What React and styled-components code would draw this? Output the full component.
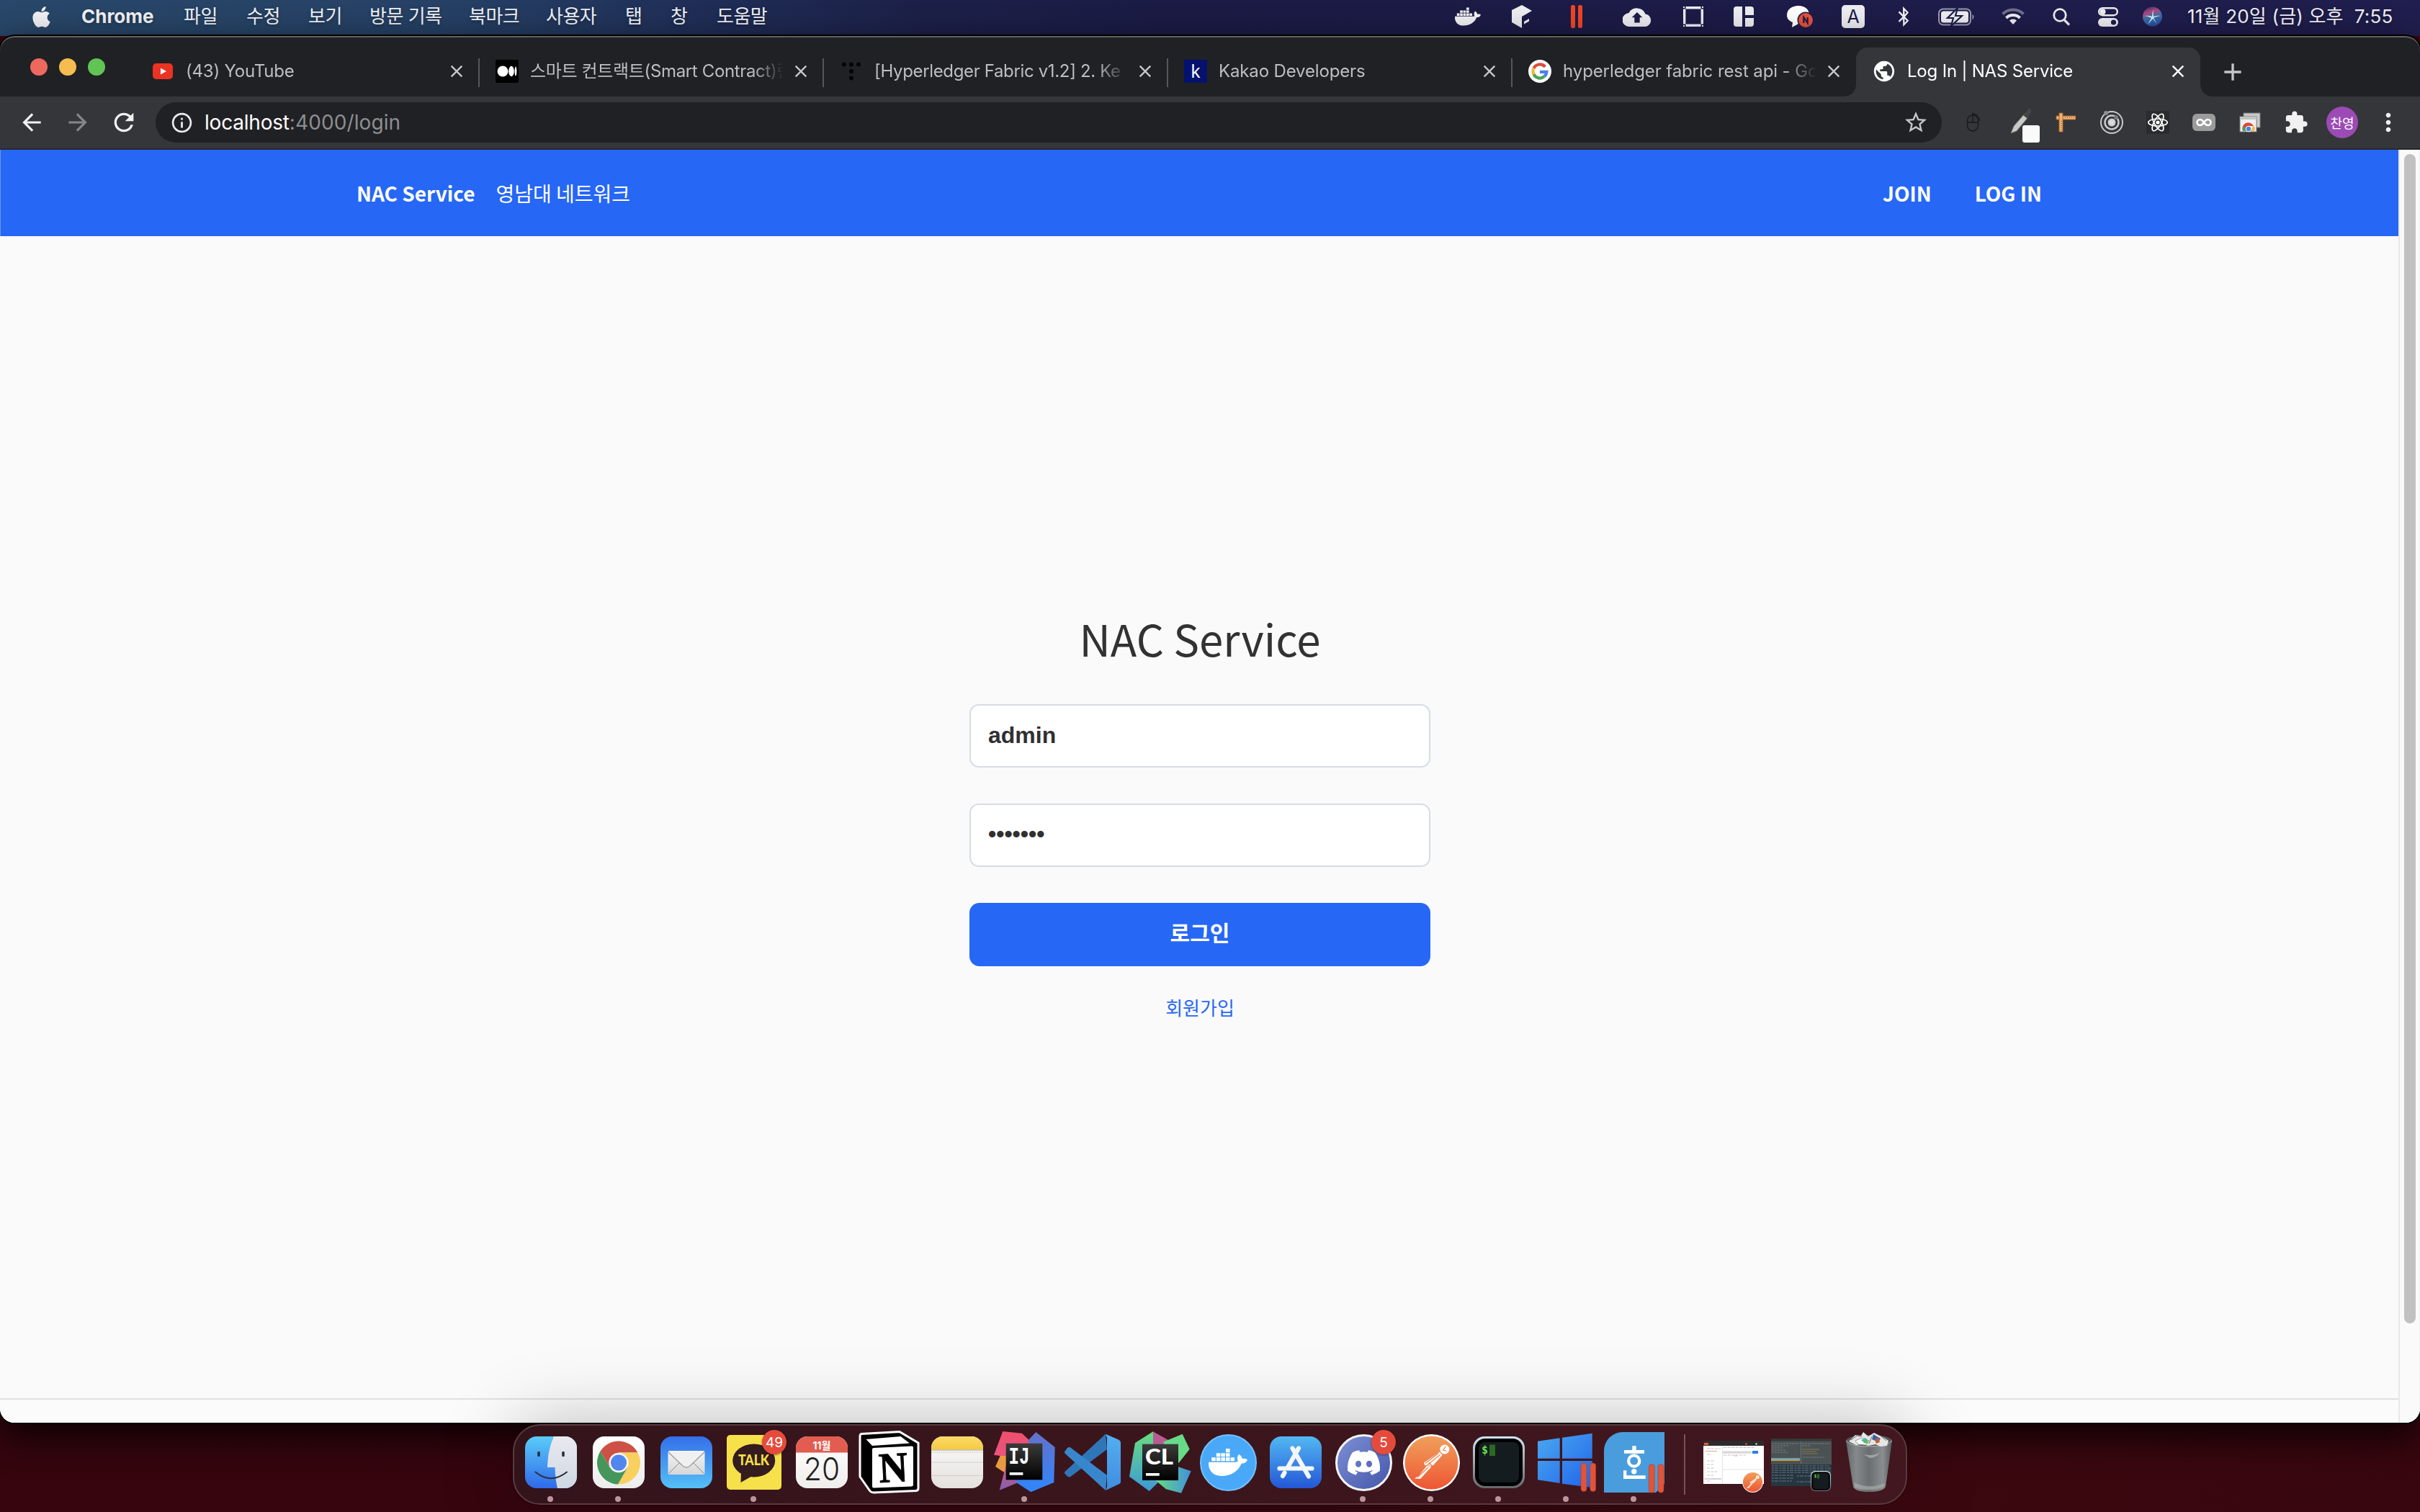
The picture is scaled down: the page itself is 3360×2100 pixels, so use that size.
import React from "react";
import styled, { createGlobalStyle, css } from "styled-components";
import { FaApple, FaDocker, FaBluetoothB, FaDiscord } from "react-icons/fa";
import {
  MdArrowBack, MdArrowForward, MdRefresh, MdInfoOutline, MdStarBorder,
  MdClose, MdAdd, MdMoreVert, MdExtension, MdPublic,
} from "react-icons/md";

const ui = `Inter, "Noto Sans CJK KR", sans-serif`;
const web = `"Noto Sans CJK KR", sans-serif`;

const GlobalStyle = createGlobalStyle`
  * { box-sizing: border-box; }
  body { margin: 0; overflow: hidden; background: #38060f; }
  svg { display: block; flex: none; }
`;

const Desktop = styled.div`
  width: 3360px;
  height: 2100px;
  overflow: hidden;
  display: flex;
  flex-direction: column;
  background: linear-gradient(90deg, #36050e 0%, #36050f 45%, #3c080f 75%, #38060f 100%);
  font-family: ${ui};
`;

/* ---------- menu bar ---------- */
const MenuBar = styled.header`
  flex: none;
  height: 50px;
  padding: 0 36px 4px 41px;
  display: flex;
  align-items: center;
  justify-content: space-between;
  color: #f1f1f4;
  font-size: 26px;
  line-height: 32px;
  background: linear-gradient(90deg, #284769 0%, #264165 18%, #1f2c55 30%, #1c2048 38%, #1b1b45 48%, #1d1b47 70%, #201e4e 100%);
  text-shadow: 0 2px 5px rgba(0, 0, 0, 0.3);
`;
const MenuList = styled.nav`
  display: grid;
  grid-template-columns: 72px 142px 87px 86px 85px 138px 107px 110px 63px 64px 90px;
  align-items: center;
  white-space: nowrap;
`;
const MenuEntry = styled.span`
  letter-spacing: -0.5px;
`;
const AppName = styled.strong`
  font-weight: 700;
  letter-spacing: 0;
`;
const StatusArea = styled.div`
  display: flex;
  align-items: center;
`;
const StatusItem = styled.span`
  display: flex;
  justify-content: center;
  width: ${(p) => p.$w}px;
  margin-right: ${(p) => p.$gap}px;
`;
const Clock = styled.time`
  width: 287px;
  white-space: pre;
  letter-spacing: 0.2px;
`;

/* ---------- browser window ---------- */
const Window = styled.section`
  flex: none;
  height: 1926px;
  display: flex;
  flex-direction: column;
  border-radius: 20px;
  overflow: hidden;
  position: relative;
  box-shadow: 0 0 0 2px #000, 0 18px 52px rgba(0, 0, 0, 0.85);
`;
const TabStrip = styled.div`
  flex: none;
  height: 84px;
  display: flex;
  padding-left: 42px;
  background: #202124;
  box-shadow: inset 0 2px 0 #606163;
  border-radius: 20px 20px 0 0;
`;
const Lights = styled.div`
  display: flex;
  gap: 16px;
  width: 145px;
  padding-top: 31px;
`;
const Light = styled.i`
  width: 24px;
  height: 24px;
  border-radius: 50%;
  background: ${(p) => p.$color};
`;
const Tab = styled.div`
  width: 478px;
  height: 68px;
  margin-top: 16px;
  padding: 0 18px 2px 23px;
  display: flex;
  align-items: center;
  position: relative;
  font-size: 24px;
  color: ${(p) => (p.$active ? "#fff" : "#bdbec0")};
  ${(p) => p.$active && css`
    background: #35363a;
    border-radius: 16px 16px 0 0;
    &::before, &::after {
      content: "";
      position: absolute;
      bottom: 0;
      width: 16px;
      height: 16px;
    }
    &::before { left: -16px; background: radial-gradient(circle at 0 0, transparent 15.5px, #35363a 16px); }
    &::after { right: -16px; background: radial-gradient(circle at 100% 0, transparent 15.5px, #35363a 16px); }
  `}
`;
const Divider = styled.i`
  width: 2px;
  height: 40px;
  margin: 31px -1px 0;
  background: #56575b;
`;
const Favicon = styled.span`
  width: 32px;
  display: flex;
  justify-content: center;
  margin-right: 16px;
`;
const TabTitle = styled.span`
  flex: 1;
  min-width: 0;
  overflow: hidden;
  white-space: nowrap;
  line-height: 36px;
  letter-spacing: ${(p) => p.$track || 0}px;
  mask-image: linear-gradient(90deg, #000 calc(100% - 44px), transparent);
`;
const TabClose = styled.span`
  width: 28px;
  margin-left: 10px;
  margin-right: -1px;
  color: ${(p) => (p.$active ? "#fff" : "#c6c7c9")};
`;
const NewTab = styled.span`
  margin: 30px 0 0 25px;
  color: #c4c5c8;
`;
const KakaoMark = styled.span`
  width: 32px;
  height: 32px;
  text-align: center;
  background: #04116e;
  color: #fff;
  font: 25px/30px "Noto Sans", sans-serif;
`;

const Toolbar = styled.div`
  flex: none;
  height: 74px;
  display: flex;
  align-items: center;
  padding: 0 12px 2px 12px;
  background: #35363a;
  box-shadow: inset 0 -2px 0 #28292c;
`;
const NavButton = styled.span`
  width: 64px;
  display: flex;
  justify-content: center;
  color: ${(p) => (p.$dim ? "#85868a" : "#f1f1f2")};
`;
const AddressBar = styled.div`
  width: 2480px;
  height: 56px;
  margin: 0 12px 0 12px;
  padding: 0 18px 0 20px;
  border-radius: 28px;
  display: flex;
  align-items: center;
  background: #202124;
  color: #e8eaed;
  font-size: 28px;
`;
const Address = styled.span`
  flex: 1;
  margin-left: 15px;
  color: #fff;
  letter-spacing: -0.2px;
  span { color: #8d8e91; letter-spacing: 0.1px; }
`;
const Extension = styled.span`
  width: 64px;
  height: 56px;
  display: flex;
  align-items: center;
  justify-content: center;
  color: #f1f1f2;
`;
const Avatar = styled.span`
  width: 44px;
  height: 44px;
  border-radius: 50%;
  display: grid;
  place-items: center;
  background: #9c4bb5;
  color: #fff;
  font: 18px ${web};
`;

/* ---------- page ---------- */
const Viewport = styled.div`
  flex: 1;
  display: flex;
  background: #fafafa;
  font-family: ${web};
`;
const Page = styled.div`
  flex: 1;
  display: flex;
  flex-direction: column;
`;
const SiteNav = styled.nav`
  height: 120px;
  padding: 0 495px 0 495px;
  display: flex;
  align-items: center;
  background: #2667f6;
  box-shadow: inset 1px 0 0 rgba(255, 255, 255, 0.3);
  color: #fff;
  font-size: 28px;
`;
const Brand = styled.a`
  font-weight: 700;
  margin-right: 29px;
`;
const Tagline = styled.a`
  flex: 1;
`;
const NavLink = styled.a`
  font-weight: 700;
  margin-left: 60px;
`;
const LoginForm = styled.form`
  flex: 1;
  width: 642px;
  margin: 0 auto;
  padding: 514px 0 0 2px;
  display: flex;
  flex-direction: column;
  align-items: center;
`;
const Title = styled.h1`
  margin: 0 0 48px;
  color: #323232;
  font-size: 60px;
  font-weight: 400;
  line-height: 88px;
`;
const Field = styled.input`
  width: 640px;
  height: 88px;
  margin-bottom: 50px;
  padding: 0 24px ${(p) => (p.type === "password" ? 4 : 2)}px;
  border: 2px solid #d5dce7;
  border-radius: 13px;
  background: #fff;
  color: #303030;
  font: 700 32px "Liberation Sans", Arial, sans-serif;
  outline: none;
`;
const Submit = styled.button`
  width: 640px;
  height: 88px;
  padding: 0 0 8px;
  border: 0;
  border-radius: 14px;
  background: #2667f6;
  color: #fff;
  font: 700 30px ${web};
`;
const JoinLink = styled.a`
  margin-top: 38px;
  color: #2667f6;
  font-size: 26px;
  line-height: 38px;
`;
const Footer = styled.footer`
  height: 34px;
  border-top: 2px solid #e0e0e0;
  background: #fbfbfb;
`;
const Scrollbar = styled.div`
  width: 30px;
  padding: 6px 6px 0;
  border-left: 2px solid #e8e8e8;
  border-right: 1px solid #f0f0f0;
  background: #fafafa;
`;
const Thumb = styled.div`
  width: 16px;
  height: 1624px;
  border-radius: 8px;
  background: #c1c1c1;
`;

/* ---------- dock ---------- */
const DockBar = styled.footer`
  flex: none;
  align-self: center;
  position: relative;
  z-index: 2;
  width: 1936px;
  height: 112px;
  margin-top: 2px;
  padding: 0 4px;
  display: flex;
  border: 2px solid #5b3a41;
  border-radius: 38px;
  background: linear-gradient(90deg, #34141b, #3a151c 40%, #42171f);
  box-shadow: 0 0 100px rgba(0, 0, 0, 0.26), 0 0 2px #000;
`;
const DockItem = styled.div`
  width: 94px;
  height: 108px;
  padding-top: 4px;
  display: flex;
  flex-direction: column;
  align-items: center;
  position: relative;
`;
const IconBox = styled.div`
  height: 94px;
  display: flex;
  align-items: center;
  justify-content: center;
`;
const RunningDot = styled.i`
  width: 8px;
  height: 8px;
  margin-right: 2px;
  border-radius: 50%;
  background: #bb949d;
`;
const Badge = styled.span`
  position: absolute;
  left: 58px;
  top: 6px;
  width: 34px;
  height: 34px;
  border-radius: 50%;
  display: grid;
  place-items: center;
  background: #e54b3c;
  color: #fff;
  font-size: 19px;
  box-shadow: 0 1px 3px rgba(0, 0, 0, 0.4);
`;
const DockDivider = styled.i`
  width: 2px;
  height: 84px;
  margin: 12px 20px 0 22px;
  background: #775159;
`;
const Disc = styled.span`
  width: 79px;
  height: 79px;
  border-radius: 50%;
  display: grid;
  place-items: center;
  border: ${(p) => p.$ring};
  background: ${(p) => p.$fill};
  color: #fff;
`;

/* ---------- menu bar icons ---------- */
const CubeIcon = () => (
  <svg width="28" height="32" viewBox="0 0 28 32" fill="#ececf1">
    <path d="M14 0 28 8 14 16v16L0 24V7z" /><path d="m17 23 7-4v3.500l-7 4z" />
  </svg>
);
const ParallelsIcon = () => (
  <svg width="16" height="32" fill="#f04524"><rect width="6" height="32" rx="2.500" /><rect x="10" width="6" height="32" rx="2.500" /></svg>
);
const CloudIcon = () => (
  <svg width="40" height="28" viewBox="0 0 40 28">
    <path fill="#ececf1" d="M9.500 28A9.500 9.500 0 0 1 8.500 9 12.500 12 0 0 1 31.500 10.500 8.800 8.800 0 0 1 31 28z" />
    <path fill="#1c1c48" d="m20 8 7.300 7.300h-3.600v7.300h-7.400v-7.300h-3.600z" />
  </svg>
);
const FrameIcon = () => (
  <svg width="28" height="28" fill="none" stroke="#ececf1"><path strokeWidth="3.400" d="M1.700 3.500v21M26.300 3.500v21M3.500 1.700h21M3.500 26.300h21" /><path fill="#ececf1" stroke="none" d="M0 0h2v2H0zM26 0h2v2h-2zM0 26h2v2H0zM26 26h2v2h-2z" /></svg>
);
const MagnetIcon = () => (
  <svg width="28" height="28" fill="#ececf1"><path d="M4 0h8v28H4a4 4 0 0 1-4-4V4a4 4 0 0 1 4-4zM16 0h8a4 4 0 0 1 4 4v8H16zM16 16h12v8a4 4 0 0 1-4 4h-8z" /></svg>
);
const ChatIcon = () => (
  <svg width="36" height="31" viewBox="0 0 36 31">
    <path fill="#fff" d="M16 0c9 0 15 5 15 13S25 25 16 25l-9 5 1-7C3 21 0 18 0 13 0 5 7 0 16 0z" />
    <circle cx="26" cy="20" r="11.500" fill="#1c1c48" /><circle cx="26" cy="20" r="9.900" fill="#e5523c" />
    <path d="M23.300 24v-8l5.400 8v-8" fill="none" stroke="#231d45" strokeWidth="2.200" />
  </svg>
);
const InputIcon = () => (
  <svg width="32" height="32"><rect width="32" height="32" rx="5" fill="#ececf1" /><text x="16" y="25" textAnchor="middle" fontFamily="Inter, sans-serif" fontSize="25" fill="#1c1c48" style={{ textShadow: "none" }}>A</text></svg>
);
const BatteryIcon = () => (
  <svg width="50" height="25" viewBox="0 0 50 25">
    <rect x="1" y="1.500" width="44" height="22" rx="6" fill="none" stroke="#9a99ad" strokeWidth="2" />
    <rect x="4" y="4.500" width="38" height="16" rx="3.500" fill="#ececf1" />
    <path d="M47.500 8.500q4 4 0 8z" fill="#9a99ad" />
    <path d="M27 0 13 14h8l-3 11 15-14h-9z" fill="#ececf1" stroke="#1c1c48" strokeWidth="2.200" />
  </svg>
);
const WifiIcon = () => (
  <svg width="32" height="24" viewBox="0 0 32 24" fill="none" strokeWidth="4">
    <path d="M1.500 8.500a20.500 20.500 0 0 1 29 0" stroke="#6f6e8c" /><path d="M6.500 14a13.500 13.500 0 0 1 19 0" stroke="#ececf1" />
    <path d="m16 23-5-5.500a7 7 0 0 1 10 0z" fill="#ececf1" />
  </svg>
);
const SearchIcon = () => (
  <svg width="24" height="25" fill="none" stroke="#ececf1" strokeWidth="2.800"><circle cx="10" cy="10" r="8.300" /><path d="m16 16.500 7 7" strokeWidth="3.200" /></svg>
);
const ControlIcon = () => (
  <svg width="28" height="27"><rect x="1.200" y="1.200" width="25.600" height="10" rx="5" fill="none" stroke="#ececf1" strokeWidth="2.400" /><circle cx="6.500" cy="6.200" r="4" fill="#ececf1" /><rect y="15" width="28" height="12" rx="6" fill="#ececf1" /><circle cx="21.500" cy="21" r="3.600" fill="#1c1c48" /></svg>
);
const SiriIcon = () => (
  <svg width="27" height="28" viewBox="0 0 27 28">
    <defs><linearGradient id="siri" x1="0.200" y1="0" x2="0.500" y2="1"><stop offset="0" stopColor="#3b3168" /><stop offset=".3" stopColor="#b0487f" /><stop offset=".55" stopColor="#3f6ea8" /><stop offset="1" stopColor="#274a9c" /></linearGradient></defs>
    <circle cx="13.500" cy="14" r="13.500" fill="url(#siri)" />
    <path d="M2 13q6-1 11 1 0-6 2-10-1 6 0 10 6-2 10-1-7 1-10 3l5 8-6-7-7 8 5-9q-5-3-10-3z" fill="#c8f3f4" />
  </svg>
);

/* ---------- favicons ---------- */
const YouTubeMark = () => (<svg width="28" height="22"><rect width="28" height="22" rx="5" fill="#ea3323" /><path d="m11 6.500 8 4.500-8 4.500z" fill="#fff" /></svg>);
const MediumMark = () => (<svg width="32" height="32"><rect width="32" height="32" rx="2" fill="#000" /><g fill="#fff"><circle cx="10" cy="16" r="7.500" /><ellipse cx="22" cy="16" rx="3.800" ry="7.200" /><ellipse cx="28" cy="16" rx="1.400" ry="6.500" /></g></svg>);
const TistoryMark = () => (<svg width="26" height="26"><g fill="#050505"><circle cx="3" cy="3.500" r="3" /><circle cx="13" cy="3.500" r="3" /><circle cx="23" cy="3.500" r="3" /><circle cx="13" cy="13" r="3" /><circle cx="13" cy="22.500" r="3" /></g></svg>);
const GoogleMark = () => (
  <svg width="32" height="32" viewBox="0 0 32 32"><circle cx="16" cy="16" r="16" fill="#fff" />
    <g fill="none" strokeWidth="4.200"><path d="M23.300 9.900A9.500 9.500 0 0 0 7.500 11.700" stroke="#dc4b3d" /><path d="M7.500 11.700a9.500 9.500 0 0 0 0 8.600" stroke="#f3b93a" /><path d="M7.500 20.300a9.500 9.500 0 0 0 14.700 2.900" stroke="#4ca456" /><path d="M22.200 23.200a9.500 9.500 0 0 0 3.200-6.400H16" stroke="#4a82ee" /></g>
  </svg>
);

/* ---------- extension icons ---------- */
const MouseIcon = () => (<svg width="20" height="30" viewBox="0 0 20 30" fill="none" stroke="#17181a" strokeWidth="1.300"><rect x="1.500" y="5" width="15" height="22" rx="7.500" /><path d="M9 1v14M1.500 15h15M9 3q9 1 9 10" /></svg>);
const DropperIcon = () => (
  <svg width="64" height="56" viewBox="0 0 64 56"><path d="M39 16 24 33l-4 10 8-3 15-18z" fill="#c9cac8" stroke="#6b6b6b" /><path d="m36 17 5-3 3-5q5-1 4 5l-3 4-1 6z" fill="#464646" /><rect x="36" y="32" width="24" height="24" rx="3" fill="#fafafa" /></svg>
);
const RulerIcon = () => (<svg width="28" height="28"><path d="M1 5h27v5H1z" fill="#efb274" stroke="#a5622d" /><path d="M5 1h5v26H5z" fill="#efb274" stroke="#a5622d" /><path d="M13 7h13M8 12v13" stroke="#6e3c15" strokeDasharray="1 2" /></svg>);
const TargetIcon = () => (<svg width="34" height="34" fill="none" stroke="#c9cacb" strokeWidth="2"><circle cx="17" cy="17" r="15" /><circle cx="17" cy="17" r="9.500" strokeWidth="2.500" /><circle cx="17" cy="17" r="4.500" fill="#dadada" /><circle cx="9" cy="4" r="3" fill="#8c8d8f" stroke="none" /><circle cx="23" cy="10" r="3" fill="#77787a" stroke="none" /></svg>);
const ReactIcon = () => (
  <svg width="32" height="32" viewBox="-16 -16 32 32"><rect x="-16" y="-16" width="32" height="32" rx="2" fill="#2a2b2e" />
    <g fill="none" stroke="#fff" strokeWidth="1.700"><ellipse rx="13.200" ry="5" /><ellipse rx="13.200" ry="5" transform="rotate(60)" /><ellipse rx="13.200" ry="5" transform="rotate(120)" /></g><circle r="2.600" fill="#fff" /></svg>
);
const InfinityIcon = () => (<svg width="32" height="24"><rect width="32" height="24" rx="6" fill="#9b9b9b" /><g fill="none" stroke="#fff" strokeWidth="2.600"><path d="M16 12c-2-3-3.500-4-5.500-4a4 4 0 0 0 0 8c2 0 3.500-1 5.500-4s3.500-4 5.500-4a4 4 0 0 1 0 8c-2 0-3.500-1-5.500-4z" /></g></svg>);
const StoreIcon = () => (
  <svg width="30" height="28" viewBox="0 0 30 28"><rect x="6" y="1" width="23" height="20" fill="#c9c9ca" stroke="#77787a" /><rect x="1" y="6" width="23" height="21" fill="#f1f1f1" stroke="#77787a" /><path d="M1 6h23v4H1z" fill="#c4c4c4" />
    <path d="M5 26a8 8 0 0 1 15-7h-7z" fill="#d8483a" /><path d="M20 18q3 4 1 8h-6z" fill="#f2bd42" /><path d="M5 26q-1-4 1-7l6 7z" fill="#4d9f56" /><circle cx="13" cy="23" r="3.800" fill="#4a80e8" stroke="#fff" /></svg>
);

/* ---------- dock icons ---------- */
const Grad = ({ id, from, to, x2 = 0, y2 = 1 }) => (
  <linearGradient id={id} x1="0" y1="0" x2={x2} y2={y2}><stop offset="0" stopColor={from} /><stop offset="1" stopColor={to} /></linearGradient>
);
const FinderIcon = () => (
  <svg width="72" height="72"><defs><Grad id="finder" from="#5accf8" to="#3069ea" /><Grad id="finderR" from="#e9e9ef" to="#d0d8e2" /><clipPath id="finderC"><rect width="72" height="72" rx="16" /></clipPath></defs>
    <g clipPath="url(#finderC)"><rect width="72" height="72" fill="url(#finder)" /><path d="M40 0Q31 20 31 43H41.500Q42 60 45 72H72V0z" fill="url(#finderR)" /></g>
    <g stroke="#27303a" strokeLinecap="round" fill="none"><path d="M19 22.500v4M53 22.500v4" strokeWidth="3.600" /><path d="M14.500 49.500Q36 67 58 49.500" strokeWidth="2" /></g></svg>
);
const ChromeIcon = () => (
  <svg width="72" height="72"><defs><Grad id="chromeBg" from="#ffffff" to="#ececec" /></defs><rect width="72" height="72" rx="16" fill="url(#chromeBg)" />
    <path d="M10.600 20.600A30 30 0 0 1 62.500 22.500H36V36.500L23.900 43.500z" fill="#cd5144" /><path d="M62.500 22.500A30 30 0 0 1 34.900 66.500L48.100 43.500 36 36.500V22.500z" fill="#f9d05e" /><path d="M34.900 66.500A30 30 0 0 1 10.600 20.600L23.900 43.500 36 36.500 48.100 43.500z" fill="#45965b" />
    <circle cx="36" cy="36.500" r="13.700" fill="#f4f3f2" /><circle cx="36" cy="36.500" r="11" fill="#5186ee" /></svg>
);
const MailIcon = () => (
  <svg width="72" height="72"><defs><Grad id="mail" from="#346fea" to="#55c0f7" /><Grad id="env" from="#f5f5f5" to="#d6d6d6" /></defs><rect width="72" height="72" rx="16" fill="url(#mail)" />
    <rect x="10.500" y="20" width="51" height="33" rx="2.500" fill="url(#env)" /><path d="m12 51 14-14M60 51 46 37" stroke="#8c8c8c" fill="none" /><path d="M11 22 31 41q5 4 10 0L61 22" fill="#f0f0f0" stroke="#9b9b9b" strokeWidth="1.300" /></svg>
);
const KakaoIcon = () => (
  <svg width="76" height="76"><rect width="76" height="76" rx="5" fill="#f6e14b" /><ellipse cx="37.700" cy="35.500" rx="29.500" ry="23" fill="#351c1e" /><path d="M20 51 19.500 66 37 56z" fill="#351c1e" />
    <text x="16" y="42" textLength="43" lengthAdjust="spacingAndGlyphs" fontFamily="Lato, sans-serif" fontWeight="900" fontSize="20" fill="#f6e14b">TALK</text></svg>
);
const CalendarIcon = () => (
  <svg width="72" height="72"><defs><clipPath id="cal"><rect width="72" height="72" rx="16" /></clipPath><Grad id="calP" from="#ffffff" to="#efeeec" /></defs><g clipPath="url(#cal)"><rect width="72" height="72" fill="url(#calP)" /><rect width="72" height="22.500" fill="#e25d50" /></g>
    <text x="36" y="18" textAnchor="middle" fontFamily={ui} fontWeight="700" fontSize="14" fill="#fff">11월</text>
    <text x="11" y="61" textLength="50" lengthAdjust="spacingAndGlyphs" fontFamily="Inter, sans-serif" fontWeight="300" fontSize="43" fill="#222">20</text></svg>
);
const NotionIcon = () => (
  <svg width="86" height="88" viewBox="0 0 86 88"><path d="M4 4.500 57 1.500 83 17V80q0 3-3 3.500L21 86q-3 0-5-2L2 64V8q0-3 2-3.500z" fill="#000" stroke="#fff" strokeWidth="3" strokeLinejoin="round" />
    <path d="m10.500 12 48-4L71 17.500 19 21z" fill="#fff" /><path d="m21 24 53-2.500q2 0 2 2V75q0 2-2 2.500L21 79.500q-2 0-2-2V26q0-2 2-2z" fill="#fff" />
    <text x="28" y="71" transform="rotate(-3 48 50)" textLength="40" lengthAdjust="spacingAndGlyphs" fontFamily="Liberation Serif, serif" fontWeight="700" fontSize="59" fill="#000" stroke="#000">N</text></svg>
);
const NotesIcon = () => (
  <svg width="72" height="72"><defs><clipPath id="notes"><rect width="72" height="72" rx="16" /></clipPath><Grad id="noteY" from="#fbdb6b" to="#f6c93f" /><Grad id="noteP" from="#fbfbfa" to="#e4e1dd" /></defs><g clipPath="url(#notes)"><rect width="72" height="72" fill="url(#noteP)" /><rect width="72" height="18.500" fill="url(#noteY)" /><path d="M0 19h72" stroke="#aaa69e" /><path d="M0 22h72" stroke="#b6b3ae" strokeDasharray="1.200 1.500" /><path d="M0 36h72M0 54.500h72" stroke="#d3d0cc" /></g></svg>
);
const IntelliJIcon = () => (
  <svg width="86" height="86"><defs><Grad id="ijR" from="#ee4f6d" to="#e9557e" /><Grad id="ijB" from="#6471c9" to="#2f86fb" /><Grad id="ijP" from="#cf5584" to="#8361b1" /><Grad id="box" from="#3b3b3b" to="#000000" /></defs>
    <path d="M12.300 0 39 2.700 58 21 50 40 0 32.700z" fill="url(#ijR)" /><path d="M8.700 34 2 49l14 9 6-24z" fill="#e99a40" /><path d="M17 46 7.700 81.700 46 66z" fill="url(#ijP)" /><path d="M58.300 1 84.700 22l-1.400 49-32 13.300L31 71l20-53-4-5z" fill="url(#ijB)" />
    <rect x="16.700" y="16.700" width="50.600" height="50.600" fill="url(#box)" /><text x="20.500" y="45" textLength="29" lengthAdjust="spacingAndGlyphs" fontFamily="Liberation Mono, monospace" fontWeight="700" fontSize="34" fill="#fff">IJ</text><rect x="21.700" y="57" width="18.700" height="3.700" fill="#fff" /></svg>
);
const CodeIcon = () => (
  <svg width="79" height="80"><defs><Grad id="vs" from="#54aff0" to="#3f8de0" /></defs>
    <path d="M57 .7 59 22 9 59.500q-3 2-5 0l-3-3q-2-2 0-4z" fill="#2f76b8" /><path d="M4 20q3-2 5 0L59 58l-2 21L1 28q-2-2 0-4z" fill="#3887cd" /><path d="M57 .7 75 8.500q3 1.500 3 4v54q0 3-3 4L57 79l2-5V6z" fill="url(#vs)" /></svg>
);
const CLionIcon = () => (
  <svg width="86" height="86"><defs><Grad id="cl1" from="#6ade7f" to="#3d98d8" /><Grad id="cl2" from="#67dd7d" to="#4190dd" x2={1} y2={0} /></defs>
    <path d="M33 .3 8 16 0 62.700 27.700 83 55 56z" fill="url(#cl1)" /><path d="M33 .3 54 12v10H33z" fill="#b95b93" /><path d="m47 14.700 26.700-11 10 21-15 19-12-10z" fill="#67db88" /><path d="m64 48 21.700 7.300L72 85.700l-21-5.400L35 67z" fill="url(#cl2)" />
    <rect x="18" y="17.700" width="50" height="50.300" fill="url(#box)" /><text x="22" y="46" textLength="39" lengthAdjust="spacingAndGlyphs" fontFamily="Lato, sans-serif" fontWeight="900" fontSize="31" fill="#fff">CL</text><rect x="23" y="58" width="18.700" height="3.700" fill="#fff" /></svg>
);
const AppStoreIcon = () => (
  <svg width="72" height="72"><defs><Grad id="as" from="#52b8f2" to="#2457d6" /></defs><rect width="72" height="72" rx="16" fill="url(#as)" /><g stroke="#f3f7fb" strokeWidth="6.200" strokeLinecap="round"><path d="M13.500 44.500H58.500" /><path d="M40 16.500 25 43M20.500 50.500l-2.500 4.500" /><path d="M31.500 16.500 54 55.500" /></g></svg>
);
const TerminalIcon = ({ size = 72 }) => (
  <svg width={size} height={size} viewBox="0 0 72 72"><defs><Grad id="term" from="#cfe4ee" to="#64686a" /></defs><rect width="72" height="72" rx="16" fill="url(#term)" /><rect x="3" y="3" width="66" height="66" rx="14" fill="#000" /><rect x="8" y="8" width="56" height="56" rx="8" fill="#151c20" /><text x="12" y="24" fontFamily="DejaVu Sans Mono, monospace" fontWeight="700" fontSize="15" fill="#62e04d">$</text><rect x="23" y="11.500" width="8" height="15.500" fill="#2c6a22" /></svg>
);
const Bars = ({ x, y }) => (<g fill="#e25437" stroke="#a83a2c" strokeWidth=".6"><rect x={x} y={y} width="8" height="39.500" rx="4" /><rect x={x + 12.7} y={y} width="8" height="39.500" rx="4" /></g>);
const WindowsIcon = () => (
  <svg width="81" height="84"><defs><linearGradient id="win" gradientUnits="userSpaceOnUse" x1="0" y1="0" x2="76" y2="76"><stop offset="0" stopColor="#4aaaf0" /><stop offset="1" stopColor="#2264ea" /></linearGradient></defs><path d="M0 12.700 30.700 8.300v28.400H0zM34 7.700 75.700 1.700v35H34zM0 40h30.700v31L0 66.300zM34 40h41.700v37L34 71.700z" fill="url(#win)" /><Bars x={60} y={43} /></svg>
);
const HancomIcon = () => (
  <svg width="84" height="85"><path d="M26 0H84V72L72 84H0V26A26 26 0 0 1 26 0z" fill="#499ddd" /><g fill="#fff"><path d="M39.300 19.300h5.400V25H56v4.700H28V25h11.300zM27 53.300h4.300v7h26.400V65H27z" /><circle cx="41.700" cy="54.700" r="3.700" /></g><circle cx="41.700" cy="40" r="7.600" fill="none" stroke="#fff" strokeWidth="4.200" /><Bars x={62.3} y={44.7} /></svg>
);
const PostmanBadge = ({ size }) => (
  <svg width={size} height={size} viewBox="0 0 79 79">
    <defs><Grad id="pm" from="#f0a05c" to="#ee5633" /></defs>
    <circle cx="39.500" cy="39.500" r="39.500" fill="#fff" /><circle cx="39.500" cy="39.500" r="37" fill="url(#pm)" />
    <g fill="#fff"><circle cx="57.800" cy="21" r="6.500" /><path d="M51 24.500 54.500 29 41 44 30 43 29 39.500z" /><path d="m33 44 6.500 1L24 62l-8-.5 6-4z" /></g>
    <g fill="none" stroke="#ee7d49" strokeWidth="1.200"><path d="M51.500 28.500 33 43.500M49 26.500 31 40.500M36 39.500l5 4.500M59.500 17l-4 5 5 1.500" /><path d="m35 46-15 14" /></g>
  </svg>
);
const ThumbFrame = styled.div`
  position: relative;
  width: 84px;
`;
const ThumbBadge = styled.div`
  position: absolute;
  right: ${(p) => p.$right}px;
  bottom: ${(p) => p.$bottom}px;
`;
const PostmanThumb = () => (
  <ThumbFrame>
    <svg width="84" height="60"><rect width="84" height="60" fill="#fff" /><rect width="84" height="7" fill="#2d2b2b" /><rect x="1" y="3" width="6" height="3" fill="#e65c38" /><circle cx="59.500" cy="4.500" r="1.300" fill="#e65c38" /><circle cx="73.500" cy="4.500" r="1.200" fill="#ddd" /><path d="M26.500 7v53M26.500 40h57" stroke="#e1e1e1" /><rect x="27" y="14.500" width="40" height="3.200" fill="#d7d7d7" /><rect x="68" y="14" width="8" height="4" fill="#2e7ce8" /><path d="M5 11h19M28 9.500h44M28 20h31M5 19h6M5 28h11M5 33h9M5 38h10M5 43h14M5 48h9M5 56h6" stroke="#bcbcbc" strokeDasharray="4 1.500" strokeWidth=".9" /><path d="M2 26v31" stroke="#e69c80" strokeDasharray="1 2" /><path d="M3 14.500h16M43 21h4" stroke="#e79072" strokeWidth=".8" /><path d="M1 53h24" stroke="#d3d3d3" strokeWidth="2" /></svg>
    <ThumbBadge $right={1} $bottom={-12}><PostmanBadge size={29} /></ThumbBadge>
  </ThumbFrame>
);
const TerminalThumb = () => (
  <ThumbFrame>
    <svg width="84" height="66"><rect width="84" height="66" fill="#4b5253" /><rect width="84" height="3.500" fill="#363839" /><rect y="36" width="84" height="30" fill="#263640" /><path d="M1 7h38M1 10h23M1 13h15M1 16h20M1 19h22M43 7h38M43 10h12M44 26h30" stroke="#838a86" strokeWidth=".8" strokeDasharray="3 1" /><path d="M43 15h24M43 18h20M43 21h22" stroke="#948355" strokeWidth=".8" /><rect y="27" width="40" height="2" fill="#62a2c8" /><rect y="29" width="40" height="2" fill="#cf993f" /><path d="M41.500 4v31" stroke="#6d7475" /><path d="M1 38h80M1 41h82M1 44h81M1 47h82M1 51h31M1 55h31M1 59h28M36 52h44M36 60h20" stroke="#70808a" strokeDasharray="3 1 5 1.500" strokeWidth=".9" /></svg>
    <ThumbBadge $right={1} $bottom={-7}><TerminalIcon size={28} /></ThumbBadge>
  </ThumbFrame>
);
const TrashIcon = () => (
  <svg width="66" height="84" viewBox="0 0 66 84"><defs><linearGradient id="bin"><stop offset="0" stopColor="#62676a" /><stop offset=".22" stopColor="#85898b" /><stop offset=".5" stopColor="#6a6e70" /><stop offset=".8" stopColor="#8a8e90" /><stop offset="1" stopColor="#55595c" /></linearGradient></defs>
    <ellipse cx="33" cy="12" rx="32" ry="8" fill="#54585a" /><path d="M1 12 11 76Q14 83 33 83T56 76L65 12Q56 20 33 20T1 12z" fill="url(#bin)" /><path d="M1 12Q8 20 33 20T65 12" fill="none" stroke="#b6b9ba" /><path d="M13 77Q33 84 54 76L55 71Q33 80 12 70z" fill="#aaadae" opacity=".65" /><path d="M26 31q14 3 22-3-5 8-14 8z" fill="#b3b6b7" opacity=".7" />
    <path d="m5 13 9-9 8 1 3-5 7 6 8-5 6 3 8 4 6 4-2 7-9 1-7-3-10 2-8-2-9 1z" fill="#e5e5e5" /><path d="m14 12 9-4 10 4-5 6-10-1z" fill="#fafafa" stroke="#777" strokeWidth=".7" /><path d="m22 11 6-3 3 3-4 4z" fill="#40b9bb" /><path d="m25 15 6-5 1 6z" fill="#6bbd4e" /><path d="m39 3 10 6-3 5-9-4z" fill="#3f61a6" /><path d="m41 11 5-4 2 7-5 2z" fill="#b76539" /><path d="m8 11 8-6 7 1M49 5l8 7M33 16l4-10" stroke="#6b6b6b" fill="none" /></svg>
);

const menus = ["파일", "수정", "보기", "방문 기록", "북마크", "사용자", "탭", "창", "도움말"];
const statusItems = [
  [36, 43, <FaDocker size={36} />], [28, 54, <CubeIcon />], [16, 56, <ParallelsIcon />],
  [40, 44, <CloudIcon />], [28, 42, <FrameIcon />], [28, 46, <MagnetIcon />], [36, 40, <ChatIcon />],
  [32, 45, <InputIcon />], [17, 40, <FaBluetoothB size={28} />], [50, 38, <BatteryIcon />],
  [32, 39, <WifiIcon />], [24, 39, <SearchIcon />], [28, 34, <ControlIcon />], [27, 35, <SiriIcon />],
];
const tabs = [
  { title: "(43) YouTube", icon: <YouTubeMark />, track: -0.2 },
  { title: "스마트 컨트랙트(Smart Contract)란", icon: <MediumMark />, divider: true, track: -0.35 },
  { title: "[Hyperledger Fabric v1.2] 2. Ke", icon: <TistoryMark />, divider: true, track: -0.35 },
  { title: "Kakao Developers", icon: <KakaoMark>k</KakaoMark>, divider: true, track: -0.15 },
  { title: "hyperledger fabric rest api - Go", icon: <GoogleMark />, divider: true, track: -0.1 },
  { title: "Log In | NAS Service", icon: <MdPublic size={34} />, active: true, track: -0.2 },
];
const extensions = [
  <MouseIcon />, <DropperIcon />, <RulerIcon />, <TargetIcon />, <ReactIcon />,
  <InfinityIcon />, <StoreIcon />, <MdExtension size={34} />, <Avatar>찬영</Avatar>, <MdMoreVert size={40} />,
];
const dockApps = [
  { icon: <FinderIcon />, running: true }, { icon: <ChromeIcon />, running: true }, { icon: <MailIcon /> },
  { icon: <KakaoIcon />, running: true, badge: "49" }, { icon: <CalendarIcon /> }, { icon: <NotionIcon /> },
  { icon: <NotesIcon /> }, { icon: <IntelliJIcon />, running: true }, { icon: <CodeIcon /> }, { icon: <CLionIcon /> },
  { icon: <Disc $fill="#49a9f8" $ring="2px solid #74c0fa"><FaDocker size={54} /></Disc> }, { icon: <AppStoreIcon /> },
  { icon: <Disc $fill="linear-gradient(135deg, #7d8fd3, #4557ab)" $ring="3px solid #f5f5f7"><FaDiscord size={49} /></Disc>, running: true, badge: "5" },
  { icon: <PostmanBadge size={79} />, running: true }, { icon: <TerminalIcon />, running: true },
  { icon: <WindowsIcon />, running: true }, { icon: <HancomIcon />, running: true },
];
const dockRight = [<PostmanThumb />, <TerminalThumb />, <TrashIcon />];

export default function App() {
  return (
    <Desktop>
      <GlobalStyle />
      <MenuBar>
        <MenuList>
          <FaApple size={33} />
          <AppName>Chrome</AppName>
          {menus.map((m) => <MenuEntry key={m}>{m}</MenuEntry>)}
        </MenuList>
        <StatusArea>
          {statusItems.map(([w, gap, icon], i) => <StatusItem key={i} $w={w} $gap={gap}>{icon}</StatusItem>)}
          <Clock>11월 20일 (금) 오후  7:55</Clock>
        </StatusArea>
      </MenuBar>

      <Window>
        <TabStrip>
          <Lights><Light $color="#ed695e" /><Light $color="#f5bd4f" /><Light $color="#61c454" /></Lights>
          {tabs.map((t) => (
            <React.Fragment key={t.title}>
              {t.divider && <Divider />}
              <Tab $active={t.active}>
                <Favicon>{t.icon}</Favicon>
                <TabTitle $track={t.track}>{t.title}</TabTitle>
                <TabClose $active={t.active}><MdClose size={28} /></TabClose>
              </Tab>
            </React.Fragment>
          ))}
          <NewTab><MdAdd size={40} /></NewTab>
        </TabStrip>
        <Toolbar>
          <NavButton><MdArrowBack size={38} /></NavButton>
          <NavButton $dim><MdArrowForward size={38} /></NavButton>
          <NavButton><MdRefresh size={40} /></NavButton>
          <AddressBar>
            <MdInfoOutline size={33} />
            <Address>localhost<span>:4000/login</span></Address>
            <MdStarBorder size={36} color="#c3c4c6" />
          </AddressBar>
          {extensions.map((icon, i) => <Extension key={i}>{icon}</Extension>)}
        </Toolbar>
        <Viewport>
          <Page>
            <SiteNav>
              <Brand>NAC Service</Brand>
              <Tagline>영남대 네트워크</Tagline>
              <NavLink>JOIN</NavLink>
              <NavLink>LOG IN</NavLink>
            </SiteNav>
            <LoginForm>
              <Title>NAC Service</Title>
              <Field type="text" defaultValue="admin" />
              <Field type="password" defaultValue="1234567" />
              <Submit type="button">로그인</Submit>
              <JoinLink>회원가입</JoinLink>
            </LoginForm>
            <Footer />
          </Page>
          <Scrollbar><Thumb /></Scrollbar>
        </Viewport>
      </Window>

      <DockBar>
        {dockApps.map((app, i) => (
          <DockItem key={i}>
            <IconBox>{app.icon}</IconBox>
            {app.running && <RunningDot />}
            {app.badge && <Badge>{app.badge}</Badge>}
          </DockItem>
        ))}
        <DockDivider />
        {dockRight.map((icon, i) => <DockItem key={i}><IconBox>{icon}</IconBox></DockItem>)}
      </DockBar>
    </Desktop>
  );
}
